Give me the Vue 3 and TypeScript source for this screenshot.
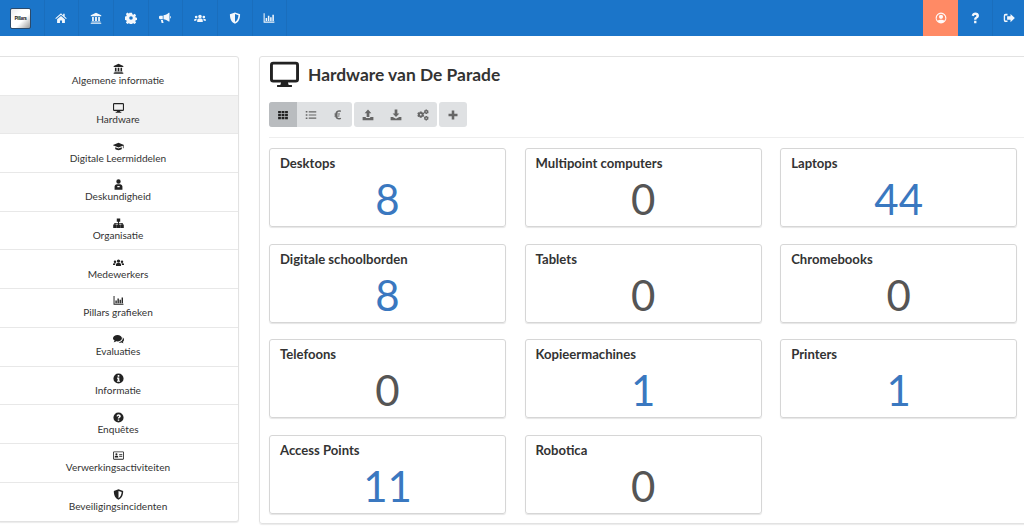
<script setup lang="ts">
const icons: Record<string, string> = {
  home: 'M8 1.800.4 8.200l.9 1L8 3.500l6.700 5.700.9-1-2.700-2.300V2.400h-2v2.100L8 1.800ZM2.800 9.600V14.500h3.800v-3.300h2.800v3.300h3.800V9.600L8 5.200 2.800 9.600Z',
  bank: 'M8 1 1 4.400v1.400h14V4.400L8 1ZM2.800 6.800v5.200h2.300V6.800H2.800Zm4 0v5.200h2.400V6.800H6.800Zm4.100 0v5.200h2.300V6.800h-2.300ZM2 12.800v1h12v-1H2ZM1 14.200v1.300h14v-1.300H1Z',
  cog: 'M6.600 1h2.800l.4 2 1.300.5 1.700-1.100 2 2-1.100 1.700.5 1.300 2 .4v2.800l-2 .4-.5 1.300 1.100 1.700-2 2-1.700-1.100-1.300.5-.4 2H6.600l-.4-2-1.300-.5-1.700 1.100-2-2 1.100-1.700-.5-1.300-2-.4V6.200l2-.4.5-1.300-1.100-1.700 2-2 1.700 1.100 1.300-.5.4-1.400ZM8 5.600a2.400 2.400 0 1 0 0 4.800 2.400 2.400 0 0 0 0-4.800Z',
  bullhorn: 'M14 1v11.500l-1 .2C11 10.800 8.500 9.800 6 9.600V4.400C8.500 4.200 11 3.200 13 1l1 0ZM1.500 5H5v4.500H1.500A1.500 1.500 0 0 1 0 8V6.500A1.500 1.500 0 0 1 1.500 5ZM2.500 10.500h2.600l1 4.300H3.500l-1-4.300ZM15 5.300a1.800 1.800 0 0 1 0 3.400V5.300Z',
  users: 'M8 3.500a2.400 2.400 0 1 1 0 4.800 2.400 2.400 0 0 1 0-4.800ZM2.900 5a1.800 1.800 0 1 1 0 3.600 1.800 1.800 0 0 1 0-3.600ZM13.100 5a1.800 1.800 0 1 1 0 3.600 1.800 1.800 0 0 1 0-3.600ZM4.300 13.200v-1.700c0-1.700 1-2.700 2.200-2.700h3c1.200 0 2.200 1 2.200 2.700v1.700H4.300ZM0 11.800V11c0-1 .7-1.800 1.700-1.800h2.100c-.5.600-.8 1.400-.8 2.600H0ZM16 11.800V11c0-1-.7-1.800-1.700-1.800h-2.100c.5.600.8 1.400.8 2.600H16Z',
  shield: 'M8 .5 14.800 3c0 5.800-1.600 10.300-6.800 12.800C2.800 13.300 1.200 8.800 1.200 3L8 .5Zm0 2.300v10.600c3.200-1.800 4.400-5.300 4.600-9L8 2.800Z',
  chart: 'M.8 1.500h1.400v11.300h13v1.400H.8V1.500Zm2.700 6.500h2v4h-2V8Zm3-3h2v7h-2V5Zm3 2h2v5h-2V7Zm3-3.500h2V12h-2V3.500Z',
  user: 'M8 .8a7.200 7.200 0 1 1 0 14.400A7.200 7.200 0 0 1 8 .8Zm0 1.400a5.800 5.800 0 0 0-4.300 9.600C4.500 10.600 6 10.300 8 10.300s3.500.3 4.300 1.500A5.800 5.800 0 0 0 8 2.200ZM8 3.600a2.800 2.800 0 1 1 0 5.600 2.800 2.800 0 0 1 0-5.600Z',
  question: 'M3.500 4.800C4.300 2.200 6 .8 8.500.8c2.800 0 4.800 1.700 4.800 4.100 0 1.700-1 2.700-2.200 3.500-.9.600-1.200 1-1.200 1.900H6.800c0-1.800.6-2.800 1.800-3.600.8-.5 1.300-.9 1.300-1.500 0-.8-.6-1.300-1.500-1.300-1 0-1.600.6-2 1.700L3.500 4.800ZM6.800 11.500h3.100v3.500H6.800v-3.500Z',
  signout: 'M6 2.500v2H3.500a.7.700 0 0 0-.7.7v5.600c0 .4.300.7.700.7H6v2H3.500A2.500 2.500 0 0 1 1 10.800V5.200a2.500 2.500 0 0 1 2.500-2.700H6ZM10 2.500l5.800 5.500-5.800 5.500v-3.300H5.500V5.800H10V2.500Z',
  monitor: 'M1.800 1.500h12.400A1.800 1.800 0 0 1 16 3.300v7.900A1.800 1.800 0 0 1 14.200 13H9.900l.4 1.300h1.800v1.200H3.900v-1.200h1.800l.4-1.300H1.800A1.800 1.800 0 0 1 0 11.200V3.300A1.800 1.800 0 0 1 1.800 1.500Zm0 1.600a.2.200 0 0 0-.2.200v7.900c0 .1.100.2.200.2h12.400a.2.200 0 0 0 .2-.2V3.300a.2.200 0 0 0-.2-.2H1.800Z',
  grid: 'M1.500 2.500h3.700v3H1.500v-3Zm4.600 0h3.800v3H6.100v-3Zm4.700 0h3.700v3h-3.700v-3ZM1.500 6.500h3.700v3H1.500v-3Zm4.600 0h3.800v3H6.100v-3Zm4.700 0h3.700v3h-3.700v-3ZM1.500 10.500h3.700v3H1.500v-3Zm4.600 0h3.800v3H6.100v-3Zm4.700 0h3.700v3h-3.700v-3Z',
  list: 'M1 2.800h2.200v2H1v-2Zm4 .2h10v1.600H5V3ZM1 7h2.200v2H1V7Zm4 .2h10v1.600H5V7.200ZM1 11.200h2.200v2H1v-2Zm4 .2h10V13H5v-1.600Z',
  euro: 'M12 2.200l-.5 1.900C10.900 3.800 10.200 3.700 9.600 3.700c-1.400 0-2.400.9-2.800 2.300h4l-.3 1.200H6.600v1.500h3.500l-.3 1.200H6.900c.4 1.300 1.400 2.100 2.800 2.100.7 0 1.400-.2 2-.5l.5 1.900c-.8.4-1.700.6-2.700.6-2.700 0-4.600-1.600-5.200-4.100H3l.3-1.200h.9V7.200H3l.3-1.200h1.200c.6-2.500 2.600-4.200 5.200-4.200.8 0 1.700.1 2.300.4Z',
  upload: 'M8 .8l4.500 4.700H9.800v5.300H6.200V5.500H3.500L8 .8ZM.8 10.500h4.300v1.500h5.800v-1.500h4.300v4.500H.8v-4.500Z',
  download: 'M6.200 .8h3.600v5.300h2.700L8 10.800 3.500 6.100h2.700V.8ZM.8 10.500h2.900L8 13l4.300-2.500h2.900v4.500H.8v-4.500Z',
  cogs: 'M6.200 3.200l.5 1.500 1.600-.4 1.300 1.700-1 1.500 1 1.500-1.300 1.700-1.600-.4-.5 1.500H3.800l-.5-1.500-1.600.4L.4 9l1-1.500-1-1.500 1.300-1.700 1.600.4.5-1.500h2.400ZM5 6.300a1.200 1.200 0 1 0 0 2.400 1.200 1.200 0 0 0 0-2.400ZM13.200.8l.4 1 1.100-.2.8 1.300-.7.900.7.900-.8 1.300-1.100-.2-.4 1h-1.700l-.4-1-1.100.2-.8-1.300.7-.9-.7-.9.8-1.300 1.100.2.4-1h1.700Zm-.9 2.200a.8.800 0 1 0 0 1.600.8.800 0 0 0 0-1.600ZM13.200 9.200l.4 1 1.100-.2.8 1.300-.7.900.7.900-.8 1.300-1.100-.2-.4 1h-1.700l-.4-1-1.100.2-.8-1.300.7-.9-.7-.9.8-1.300 1.100.2.4-1h1.700Zm-.9 2.200a.8.800 0 1 0 0 1.600.8.800 0 0 0 0-1.600Z',
  plus: 'M6.300 2h3.400v4.300H14v3.400H9.700V14H6.300V9.700H2V6.300h4.300V2Z',
  cap: 'M8 2.500-.3 6l8.300 3.500 6.400-2.700v3.700h1V6.300L16.300 6 8 2.500ZM3.200 9v2.800c1.200 1.100 2.900 1.700 4.800 1.700s3.600-.6 4.800-1.700V9L8 11 3.200 9Z',
  expert: 'M8 .5a3.200 3.200 0 1 1 0 6.400A3.200 3.200 0 0 1 8 .5ZM2.300 15.500V11c0-2.200 1.600-3.500 3.400-3.500h4.600c1.800 0 3.400 1.300 3.400 3.500v4.500H2.300Zm4-3.500h3.400v-1.800H6.300V12Z',
  org: 'M5.500.8h5v4.600H8.700v1.800h5.500v2.400h1.500v4.900h-5V9.600h1.700V8.300H8.700v1.300h1.700v4.900H5.600V9.600h1.700V8.300H3.600v1.300h1.700v4.900h-5V9.600h1.600V7.200h5.400V5.400H5.500V.8Z',
  chat: 'M6.500 1.500C10 1.500 13 3.600 13 6.200S10 10.900 6.500 10.900c-.7 0-1.300-.1-1.900-.2C3.600 11.500 2.300 12 .8 12c.8-.8 1.300-1.600 1.500-2.500C.8 8.600 0 7.500 0 6.200 0 3.600 3 1.500 6.500 1.500Zm7.300 3.300C15.100 5.700 16 6.900 16 8.400c0 1.200-.7 2.300-1.800 3 .1.700.5 1.400 1.200 2.100-1.100 0-2.100-.4-2.900-1-.5.100-1 .2-1.500.2-1 0-1.900-.2-2.700-.5 3.300-.4 6-2.700 6-5.500 0-.6-.1-1.300-.3-1.900Z',
  info: 'M8 .6a7.400 7.400 0 1 1 0 14.800A7.400 7.400 0 0 1 8 .6ZM6.800 3v2.300h2.400V3H6.800ZM5.800 6.700v1.500h1v3.100h-1v1.500h4.400v-1.500h-1V6.700H5.800Z',
  qcircle: 'M8 .6a7.400 7.400 0 1 1 0 14.800A7.400 7.400 0 0 1 8 .6ZM6.900 10.800v2.100h2.200v-2.100H6.900ZM5 6l1.800.5c.2-.7.600-1.100 1.200-1.100s.9.300.9.800c0 .4-.3.700-.8 1-.8.500-1.200 1.200-1.200 2.400h2.200c0-.6.200-.9.700-1.200.8-.5 1.500-1.200 1.500-2.300 0-1.700-1.400-3-3.300-3C6.600 3.100 5.500 4.200 5 6Z',
  idcard: 'M1.500 2h13A1.500 1.500 0 0 1 16 3.500v9a1.500 1.500 0 0 1-1.500 1.500h-13A1.500 1.500 0 0 1 0 12.500v-9A1.500 1.500 0 0 1 1.500 2Zm-.1 1.300a.3.300 0 0 0-.2.200v9c0 .1.100.2.200.2h13.200a.3.300 0 0 0 .2-.2v-9a.3.300 0 0 0-.2-.2H1.400ZM5 4.800a1.500 1.500 0 1 1 0 3 1.500 1.500 0 0 1 0-3ZM2.500 11v-1c0-1 .8-1.500 1.500-1.500h2c.7 0 1.500.5 1.500 1.500v1H2.500ZM9 6h4.500v1.200H9V6Zm0 2.500h4.500v1.200H9V8.500Z',
}

const navIcons = ['home', 'bank', 'cog', 'bullhorn', 'users', 'shield', 'chart']

const menu = [
  { icon: 'bank', label: 'Algemene informatie' },
  { icon: 'monitor', label: 'Hardware', active: true },
  { icon: 'cap', label: 'Digitale Leermiddelen' },
  { icon: 'expert', label: 'Deskundigheid' },
  { icon: 'org', label: 'Organisatie' },
  { icon: 'users', label: 'Medewerkers' },
  { icon: 'chart', label: 'Pillars grafieken' },
  { icon: 'chat', label: 'Evaluaties' },
  { icon: 'info', label: 'Informatie' },
  { icon: 'qcircle', label: 'Enquêtes' },
  { icon: 'idcard', label: 'Verwerkingsactiviteiten' },
  { icon: 'shield', label: 'Beveiligingsincidenten' },
]

const toolbar = [
  [{ icon: 'grid', active: true }, { icon: 'list' }, { icon: 'euro' }],
  [{ icon: 'upload' }, { icon: 'download' }, { icon: 'cogs' }],
  [{ icon: 'plus' }],
]

const cards = [
  { title: 'Desktops', value: 8 },
  { title: 'Multipoint computers', value: 0 },
  { title: 'Laptops', value: 44 },
  { title: 'Digitale schoolborden', value: 8 },
  { title: 'Tablets', value: 0 },
  { title: 'Chromebooks', value: 0 },
  { title: 'Telefoons', value: 0 },
  { title: 'Kopieermachines', value: 1 },
  { title: 'Printers', value: 1 },
  { title: 'Access Points', value: 11 },
  { title: 'Robotica', value: 0 },
]
</script>

<template>
  <div class="page">
    <header class="topbar">
      <div class="logo-cell">
        <div class="logo"><span>Pillars</span></div>
      </div>
      <a v-for="n in navIcons" :key="n" class="nav-item">
        <svg class="nav-icon" viewBox="0 0 16 16"><path :d="icons[n]" /></svg>
      </a>
      <div class="spacer"></div>
      <a class="nav-right user"><svg class="nav-icon" viewBox="0 0 16 16"><path :d="icons.user" /></svg></a>
      <a class="nav-right"><svg class="nav-icon" viewBox="0 0 16 16"><path :d="icons.question" /></svg></a>
      <a class="nav-right last"><svg class="nav-icon" viewBox="0 0 16 16"><path :d="icons.signout" /></svg></a>
    </header>

    <div class="content">
      <aside class="sidebar">
        <a v-for="m in menu" :key="m.label" class="side-item" :class="{ active: m.active }">
          <svg class="side-icon" viewBox="0 0 16 16"><path :d="icons[m.icon]" /></svg>
          <span>{{ m.label }}</span>
        </a>
      </aside>

      <main class="panel">
        <div class="heading">
          <svg class="heading-icon" viewBox="0 0 16 16"><path :d="icons.monitor" /></svg>
          <h1>Hardware van De Parade</h1>
        </div>
        <div class="toolbar">
          <div v-for="(g, i) in toolbar" :key="i" class="btn-group">
            <button v-for="b in g" :key="b.icon" class="tool" :class="{ active: 'active' in b }">
              <svg class="tool-icon" viewBox="0 0 16 16"><path :d="icons[b.icon]" /></svg>
            </button>
          </div>
        </div>
        <div class="rule"></div>
        <div class="cards">
          <div v-for="c in cards" :key="c.title" class="card">
            <div class="card-title">{{ c.title }}</div>
            <div class="card-value" :class="{ positive: c.value > 0 }">{{ c.value }}</div>
          </div>
        </div>
      </main>
    </div>
  </div>
</template>

<style>
html, body { margin: 0; background: #fff; overflow: hidden; }
</style>

<style scoped>
.page {
  width: 1024px;
  height: 531px;
  overflow: hidden;
  font-family: Lato, "Open Sans", sans-serif;
  color: #333;
}
.topbar {
  display: flex;
  height: 36px;
  background: #1b75c9;
}
.logo-cell {
  flex: none;
  width: 44.500px;
  display: flex;
  align-items: center;
  padding-left: 10px;
  box-sizing: border-box;
  border-right: 1px solid #1a6ebd;
}
.logo {
  width: 21px;
  height: 21px;
  box-sizing: border-box;
  border: 1px solid #2b4a6b;
  border-radius: 2px;
  background: linear-gradient(135deg, #e8e8e8, #fff 35%, #fff 60%, #999);
  display: flex;
  align-items: center;
  justify-content: center;
  overflow: hidden;
}
.logo span {
  font-size: 5px;
  font-weight: 900;
  color: #222;
  letter-spacing: -0.2px;
}
.nav-item {
  flex: none;
  width: 34.700px;
  box-sizing: border-box;
  border-right: 1px solid #1a6ebd;
  display: flex;
  align-items: center;
  justify-content: center;
}
.nav-icon {
  width: 12px;
  height: 12px;
  fill: #fff;
  opacity: 0.95;
}
.spacer { flex: 1; }
.nav-right {
  flex: none;
  box-sizing: border-box;
  width: 34px;
  display: flex;
  align-items: center;
  justify-content: center;
}
.nav-right.last { width: 32px; border-left: 1px solid #1a6ebd; }
.nav-right.user { background: #ff8a65; width: 35px; }
.content {
  display: flex;
  align-items: flex-start;
  padding-top: 20px;
}
.sidebar {
  flex: none;
  width: 242px;
  margin-left: -3px;
  box-sizing: border-box;
  border: 1px solid #e2e2e2;
  border-radius: 3px;
  box-shadow: 0 1px 1px rgba(0, 0, 0, 0.08);
  background: #fff;
}
.side-item {
  height: 38.700px;
  box-sizing: border-box;
  border-bottom: 1px solid #e8e8e8;
  display: flex;
  flex-direction: column;
  align-items: center;
  justify-content: center;
  font-size: 10.100px;
  line-height: 12px;
  color: #333;
  padding-bottom: 2px;
}
.side-item:last-child { border-bottom: 0; }
.side-item.active { background: #f1f1f1; }
.side-icon {
  width: 11px;
  height: 11px;
  fill: #222;
}
.panel {
  flex: none;
  width: 780px;
  margin-left: 20px;
  box-sizing: border-box;
  height: 468px;
  border: 1px solid #e2e2e2;
  border-radius: 3px;
  box-shadow: 0 1px 1px rgba(0, 0, 0, 0.08);
  padding: 0 0 0 9px;
}
.heading {
  display: flex;
  align-items: center;
  height: 36px;
}
.heading-icon {
  width: 29px;
  height: 29px;
  fill: #222;
  margin: 0 9px 4px 1px;
}
h1 {
  margin: 0 0 2px;
  font-size: 17.400px;
  font-weight: 700;
  color: #333;
}
.toolbar {
  display: flex;
  gap: 2px;
  margin-top: 9px;
}
.btn-group {
  display: flex;
  border-radius: 3px;
  overflow: hidden;
  background: #dfe1e3;
}
.tool {
  width: 27.700px;
  height: 25px;
  padding: 0;
  border: 0;
  background: transparent;
  display: flex;
  align-items: center;
  justify-content: center;
}
.tool.active { background: #b9bcbf; }
.tool-icon {
  width: 12px;
  height: 12px;
  fill: #666;
}
.tool.active .tool-icon { fill: #222; }
.rule {
  height: 1px;
  background: #eee;
  margin-top: 10px;
  margin-bottom: 10px;
}
.cards {
  display: grid;
  grid-template-columns: repeat(3, 237px);
  column-gap: 18.600px;
  grid-auto-rows: 79px;
  row-gap: 16.700px;
}
.card {
  box-sizing: border-box;
  border: 1px solid #d6d6d6;
  border-radius: 3px;
  box-shadow: 0 1px 1px rgba(0, 0, 0, 0.1);
  padding: 6px 10px 0;
}
.card-title {
  font-size: 13.100px;
  line-height: 16px;
  font-weight: 700;
  color: #333;
}
.card-value {
  text-align: center;
  font-size: 42px;
  line-height: 46px;
  margin-top: 5px;
  color: #555;
}
.card-value.positive { color: #3a78c0; }
</style>
